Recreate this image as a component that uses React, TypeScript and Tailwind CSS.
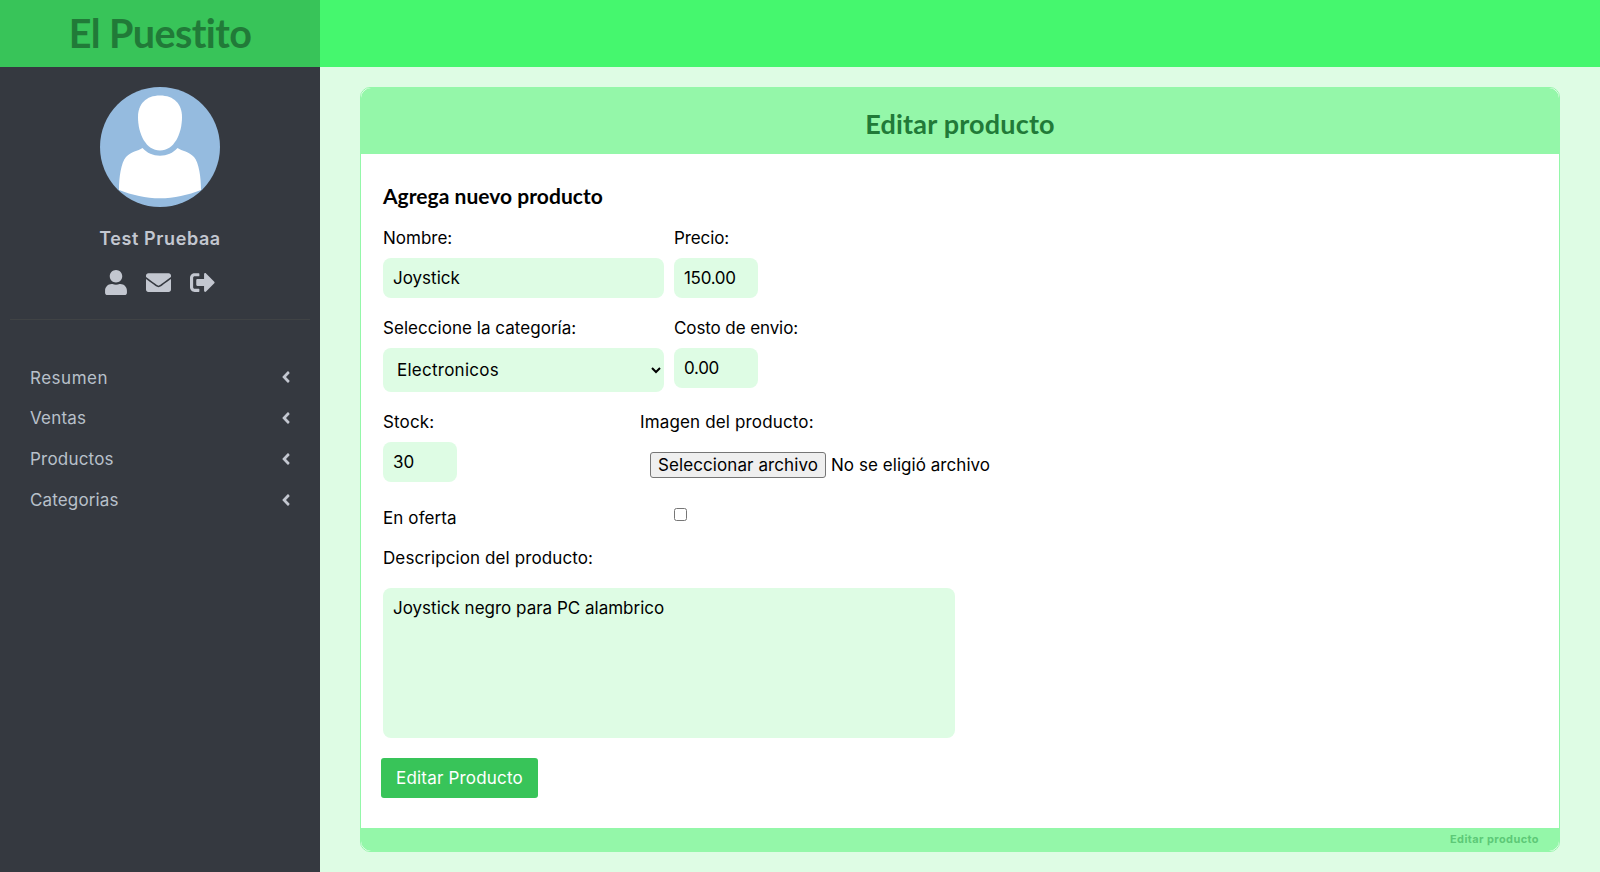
import type { ReactNode } from "react";
import { FaUser, FaEnvelope, FaSignOutAlt, FaAngleLeft } from "react-icons/fa";

const menu = [
  { name: "Resumen", cls: "tracking-[0.5px]" },
  { name: "Ventas", cls: "tracking-[0.2px]" },
  { name: "Productos", cls: "tracking-[0.2px]" },
  { name: "Categorias", cls: "tracking-[0.15px]" },
];

function Label({ children, className = "" }: { children: ReactNode; className?: string }) {
  return <div className={`h-5 leading-5 whitespace-nowrap ${className}`}>{children}</div>;
}

function Box({ children, className = "h-10" }: { children: ReactNode; className?: string }) {
  return <div className={`mt-[10px] flex items-center rounded-lg bg-[#defce4] px-2.5 pt-0.5 ${className}`}>{children}</div>;
}

function Avatar() {
  return (
    <svg viewBox="0 0 120 120" className="size-[120px]">
      <circle cx="60" cy="60" r="60" fill="#95bbdf" />
      <path fill="#fff" d="M60 8.500C46 8.500 38 17 38 30C38 47 46 63.500 60 63.500C74 63.500 82 47 82 30C82 17 74 8.500 60 8.500Z" />
      <path fill="#fff" d="M42.500 61C47 66 53 68.700 60 68.700C67 68.700 73 66 77.500 61C82 64 89 64.500 94 70C99 76 101 90 101 103C88 108 74 111.300 60 111.300C46 111.300 32 108 19 103C19 90 21 76 26 70C31 64.500 38 64 42.500 61Z" />
    </svg>
  );
}

export default function App() {
  return (
    <div className="flex h-[872px] w-[1600px] overflow-hidden bg-[#defce4] font-['Inter',sans-serif] text-[17px] text-black">
      <aside className="flex w-80 flex-col bg-[#353940] text-[#b8c0ca]">
        <div className="flex h-[67px] items-center justify-center bg-[#38c459] pb-px font-['Lato',sans-serif] text-[39.500px] font-bold tracking-[-0.6px] text-[#217a38]">
          El Puestito
        </div>
        <div className="mx-2.5 flex h-[253px] flex-col items-center border-b border-[#404345] pt-5">
          <Avatar />
          <div className="mt-5 h-6 text-[18px] leading-6 font-semibold tracking-[0.6px] whitespace-nowrap text-[#c3c7d0]">Test Pruebaa</div>
          <div className="mt-[19px] flex h-[25px] w-[110px] items-center justify-between text-[25px] text-[#c3c7d0]">
            <FaUser className="w-[22px]" />
            <FaEnvelope />
            <FaSignOutAlt />
          </div>
        </div>
        <nav className="mt-[38px] flex flex-col pr-[25px] pl-[30px]">
          {menu.map((m) => (
            <div key={m.name} className="flex h-[40.800px] items-center justify-between">
              <span className={m.cls}>{m.name}</span>
              <FaAngleLeft className="mb-0.5 text-[18px] text-[#c3c7d0]" />
            </div>
          ))}
        </nav>
      </aside>

      <div className="flex flex-1 flex-col">
        <header className="h-[67px] bg-[#45f76e]" />
        <main className="px-10 pt-5">
          <section className="flex h-[765px] flex-col rounded-[10px] border border-[#94f7a9] bg-white">
            <h1 className="flex h-[66px] shrink-0 items-center justify-center rounded-t-[10px] bg-[#94f7a9] pt-1.5 font-['Lato',sans-serif] text-[27px] font-bold tracking-[0.2px] text-[#217a38]">
              Editar producto
            </h1>
            <div className="flex-1 pl-[22px]">
              <h2 className="mt-[28px] h-7 font-['Lato',sans-serif] text-[21px] leading-7 font-bold tracking-[0.04px]">Agrega nuevo producto</h2>
              <div className="mt-[18px] flex gap-2.5">
                <div className="w-[281px]">
                  <Label>Nombre:</Label>
                  <Box>Joystick</Box>
                </div>
                <div className="w-[84px]">
                  <Label className="tracking-[-0.1px]">Precio:</Label>
                  <Box className="h-10 tracking-[-0.3px]">150.00</Box>
                </div>
              </div>
              <div className="mt-5 flex gap-2.5">
                <div className="w-[281px]">
                  <Label className="tracking-[0.04px]">Seleccione la categoría:</Label>
                  <Box className="h-11 justify-between pr-[3px] pl-[14px]">
                    <span className="tracking-[0.25px]">Electronicos</span>
                    <svg viewBox="0 0 10 8" className="mb-0.5 h-2 w-2.5">
                      <path d="M1 2l4 4 4-4" fill="none" stroke="#000" strokeWidth="2" />
                    </svg>
                  </Box>
                </div>
                <div className="w-[84px]">
                  <Label className="tracking-[-0.1px]">Costo de envio:</Label>
                  <Box className="h-10 tracking-[-0.3px]">0.00</Box>
                </div>
              </div>
              <div className="mt-5 flex">
                <div className="w-[257px]">
                  <Label className="tracking-[0.15px]">Stock:</Label>
                  <Box className="h-10 w-[74px]">30</Box>
                </div>
                <div>
                  <Label className="tracking-[0.15px]">Imagen del producto:</Label>
                  <div className="mt-5 flex h-[26px] items-center pl-[10px] leading-[22px] whitespace-nowrap">
                    <span className="flex h-[26px] w-[176px] items-center justify-center rounded-[3px] border border-[#767676] bg-[#efefef] tracking-[0.1px]">
                      Seleccionar archivo
                    </span>
                    <span className="ml-[5px] tracking-[0.05px]">No se eligió archivo</span>
                  </div>
                </div>
              </div>
              <div className="mt-[26px] flex">
                <Label className="w-[291px] tracking-[0.1px]">En oferta</Label>
                <span className="size-[13px] rounded-[2.500px] border border-[#767676] bg-white" />
              </div>
              <Label className="mt-5 tracking-[0.1px]">Descripcion del producto:</Label>
              <div className="mt-5 h-[150px] w-[572px] rounded-lg bg-[#defce4] px-2.5 pt-[10px] leading-5">Joystick negro para PC alambrico</div>
              <div className="mt-5 -ml-0.5 flex h-10 w-[157px] items-center justify-center rounded-[3px] bg-[#38c459] pt-0.5 tracking-[0.2px] whitespace-nowrap text-white">
                Editar Producto
              </div>
            </div>
            <footer className="flex h-[23px] shrink-0 items-center justify-end rounded-b-[10px] bg-[#94f7a9] pr-5 text-[11px] font-bold tracking-[0.4px] text-[#5dc977]">
              Editar producto
            </footer>
          </section>
        </main>
      </div>
    </div>
  );
}
